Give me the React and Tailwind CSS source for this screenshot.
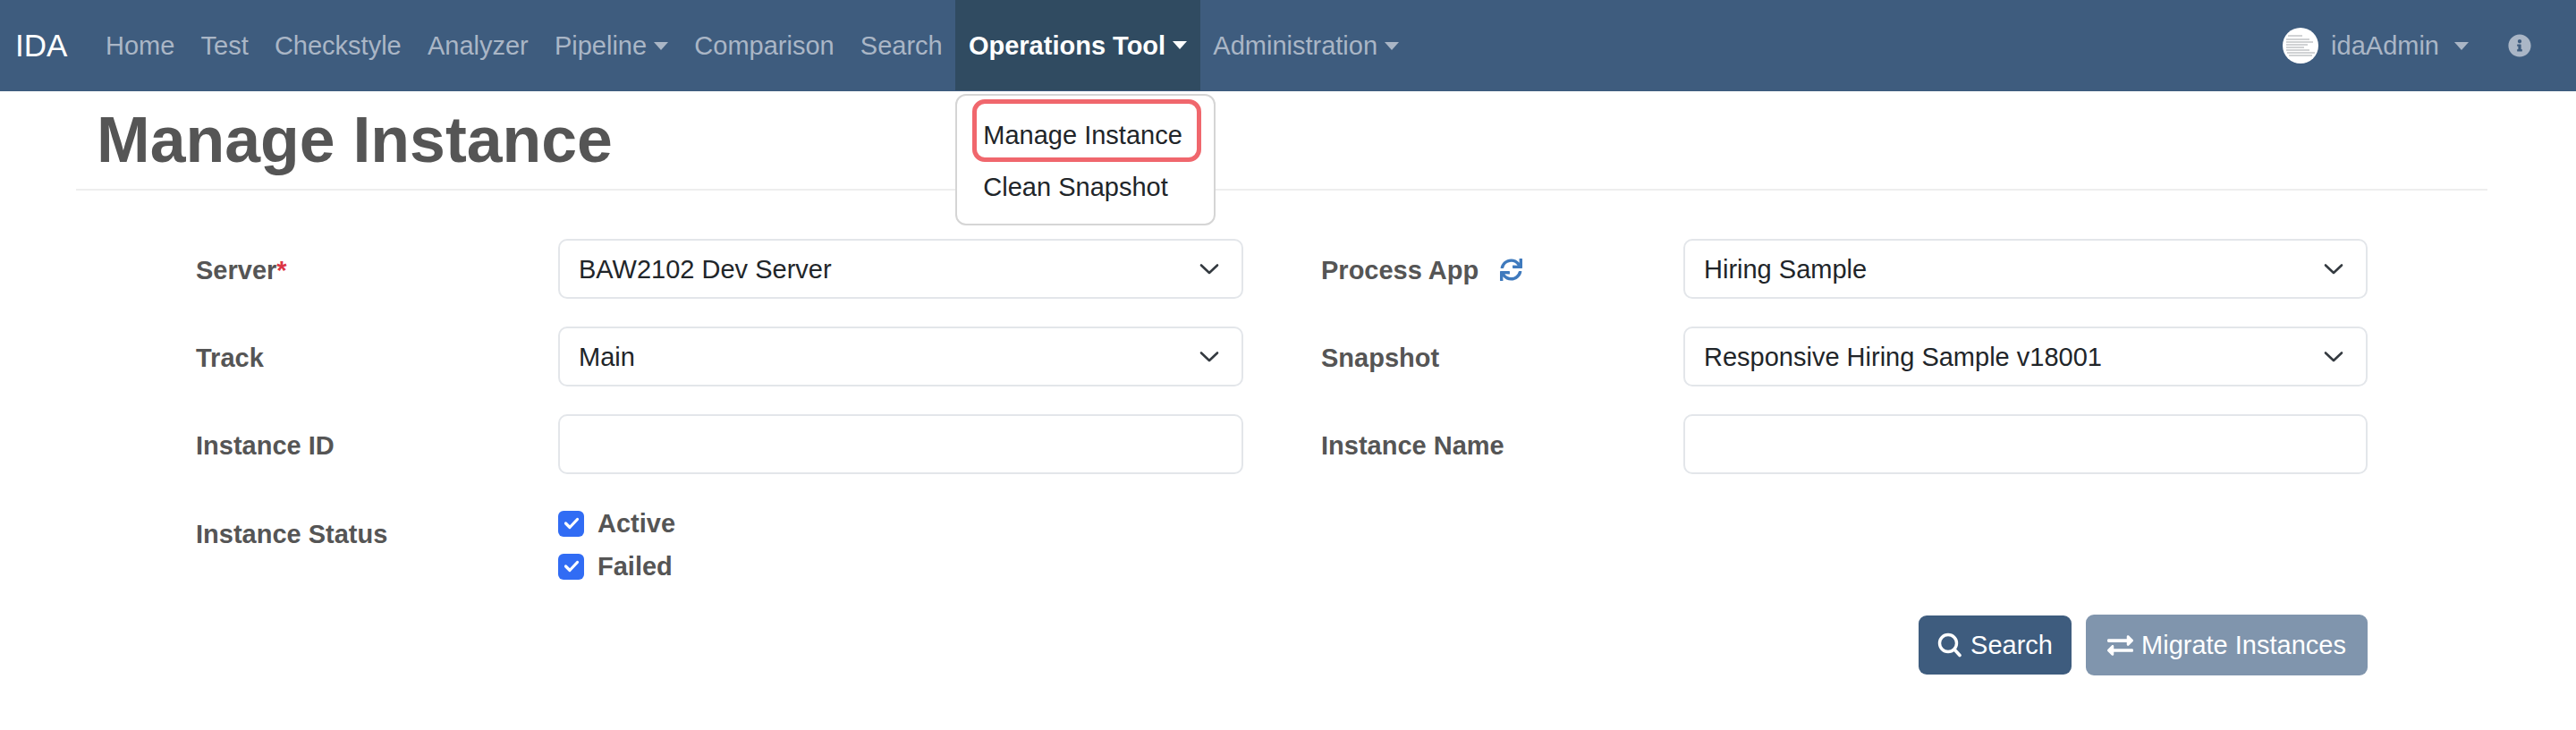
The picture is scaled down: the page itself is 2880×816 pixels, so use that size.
import React from "react";
import { FaExchangeAlt, FaSync, FaInfoCircle } from "react-icons/fa";

const Caret = () => (
  <span className="ml-[8px] inline-block h-0 w-0 border-x-[8px] border-t-[9px] border-x-transparent border-t-current" />
);

const NavItem = ({ children, caret }) => (
  <a className="flex h-full items-center px-[14.6px] text-[#aab6c6]">
    {children}
    {caret && <Caret />}
  </a>
);

const Chevron = () => (
  <svg width="22" height="14" viewBox="0 0 22 14" fill="none" className="shrink-0">
    <path d="M2 2.5 L11 11 L20 2.5" stroke="#343a40" strokeWidth="2.6" strokeLinecap="round" strokeLinejoin="round" />
  </svg>
);

const Select = ({ value }) => (
  <div className="flex h-[67px] flex-1 items-center justify-between rounded-[10px] border-2 border-[#e3e6ea] bg-white pl-[21px] pr-[25px] text-[#212529]">
    <span>{value}</span>
    <Chevron />
  </div>
);

const Input = () => (
  <input className="h-[67px] min-w-0 flex-1 rounded-[10px] border-2 border-[#e3e6ea] bg-white" />
);

const Field = ({ label, children }) => (
  <div className="flex h-[67px] items-center">
    <div className="flex w-[405px] shrink-0 items-center pt-[2px] font-bold text-[#555555]">{label}</div>
    {children}
  </div>
);

const Check = ({ label }) => (
  <div className="flex h-[48px] items-center gap-[15px]">
    <span className="flex h-[29px] w-[29px] items-center justify-center rounded-[6px] bg-[#316cf4]">
      <svg width="18" height="14" viewBox="0 0 18 14" fill="none">
        <path d="M2.5 7 L7 11.5 L15.5 2.5" stroke="#fff" strokeWidth="3.2" strokeLinecap="round" strokeLinejoin="round" />
      </svg>
    </span>
    <span className="font-bold text-[#555555]">{label}</span>
  </div>
);

export default function App() {
  return (
    <div className="min-h-[816px] bg-white text-[29px] leading-[44px] [font-family:'Liberation_Sans',Arial,sans-serif]">
      <nav className="flex h-[102px] items-stretch bg-[#3e5c7e]">
        <a className="flex w-[103.4px] items-center pl-[17px] text-[35px] text-white">IDA</a>
        <NavItem>Home</NavItem>
        <NavItem>Test</NavItem>
        <NavItem>Checkstyle</NavItem>
        <NavItem>Analyzer</NavItem>
        <NavItem caret>Pipeline</NavItem>
        <NavItem>Comparison</NavItem>
        <NavItem>Search</NavItem>
        <div className="relative h-[101px] bg-[#304b61]">
          <a className="flex h-full items-center px-[14.6px] font-bold text-white">
            Operations Tool
            <Caret />
          </a>
          <div className="absolute left-0 top-[105px] z-10 h-[147px] w-[291px] rounded-[12px] border-2 border-[#d5d5d5] bg-white pt-[15px] text-[#212529]">
            <div className="flex h-[58px] items-center pl-[29px]">Manage Instance</div>
            <div className="flex h-[58px] items-center pl-[29px]">Clean Snapshot</div>
            <div className="absolute left-[17px] top-[4px] h-[70px] w-[256px] rounded-[14px] border-[5px] border-[#f0676d]" />
          </div>
        </div>
        <NavItem caret>Administration</NavItem>
        <div className="ml-auto flex items-center pr-[50px] text-[#aab6c6]">
          <svg width="40" height="40" viewBox="0 0 40 40" className="mr-[14px]">
            <circle cx="20" cy="20" r="20" fill="#fff" />
            <g stroke="#8a8f94" strokeWidth="0.8">
              <path d="M6 9H22M4 13H30M4 16H34M4 19H28M4 22H24M4 25H30M5 28H36M7 31H33" />
            </g>
          </svg>
          <span>idaAdmin</span>
          <span className="ml-[9px] flex"><Caret /></span>
          <FaInfoCircle className="ml-[44px] h-[26px] w-[26px]" />
        </div>
      </nav>

      <div className="ml-[85px] flex h-[111px] w-[2696px] items-center border-b-2 border-[#eeeeee] pb-[2px] pl-[23px] text-[71.6px] font-bold leading-[86px] text-[#555555]">
        <h1>Manage Instance</h1>
      </div>

      <div className="ml-[219px] mt-[54px] w-[2428px]">
        <div className="grid grid-cols-[1171px_1170px] gap-x-[87px] gap-y-[31px]">
          <Field label={<span>Server<span className="text-[#dc3545]">*</span></span>}>
            <Select value="BAW2102 Dev Server" />
          </Field>
          <Field label={<span className="flex items-center">Process App<FaSync className="ml-[24px] h-[25px] w-[25px] text-[#3f7abd]" /></span>}>
            <Select value="Hiring Sample" />
          </Field>
          <Field label="Track">
            <Select value="Main" />
          </Field>
          <Field label="Snapshot">
            <Select value="Responsive Hiring Sample v18001" />
          </Field>
          <Field label="Instance ID">
            <Input />
          </Field>
          <Field label="Instance Name">
            <Input />
          </Field>
          <div className="flex">
            <div className="w-[405px] shrink-0 pt-[14px] font-bold text-[#555555]">Instance Status</div>
            <div className="flex flex-col">
              <Check label="Active" />
              <Check label="Failed" />
            </div>
          </div>
        </div>
        <div className="mt-[30px] flex items-center justify-end gap-[16px] text-white">
          <button className="flex h-[66px] w-[171px] items-center justify-center gap-[10px] rounded-[9px] bg-[#3e5c7e]">
            <svg width="27" height="28" viewBox="0 0 27 28" fill="none" stroke="#fff" strokeLinecap="round" className="shrink-0">
              <circle cx="12" cy="12" r="9.5" strokeWidth="3.4" />
              <path d="M19.5 19.5 L25 25.5" strokeWidth="3.6" />
            </svg>
            Search
          </button>
          <button className="flex h-[68px] w-[315px] items-center justify-center gap-[9px] rounded-[9px] bg-[#8095ad]">
            <FaExchangeAlt className="h-[29px] w-[29px]" />
            Migrate Instances
          </button>
        </div>
      </div>
    </div>
  );
}
